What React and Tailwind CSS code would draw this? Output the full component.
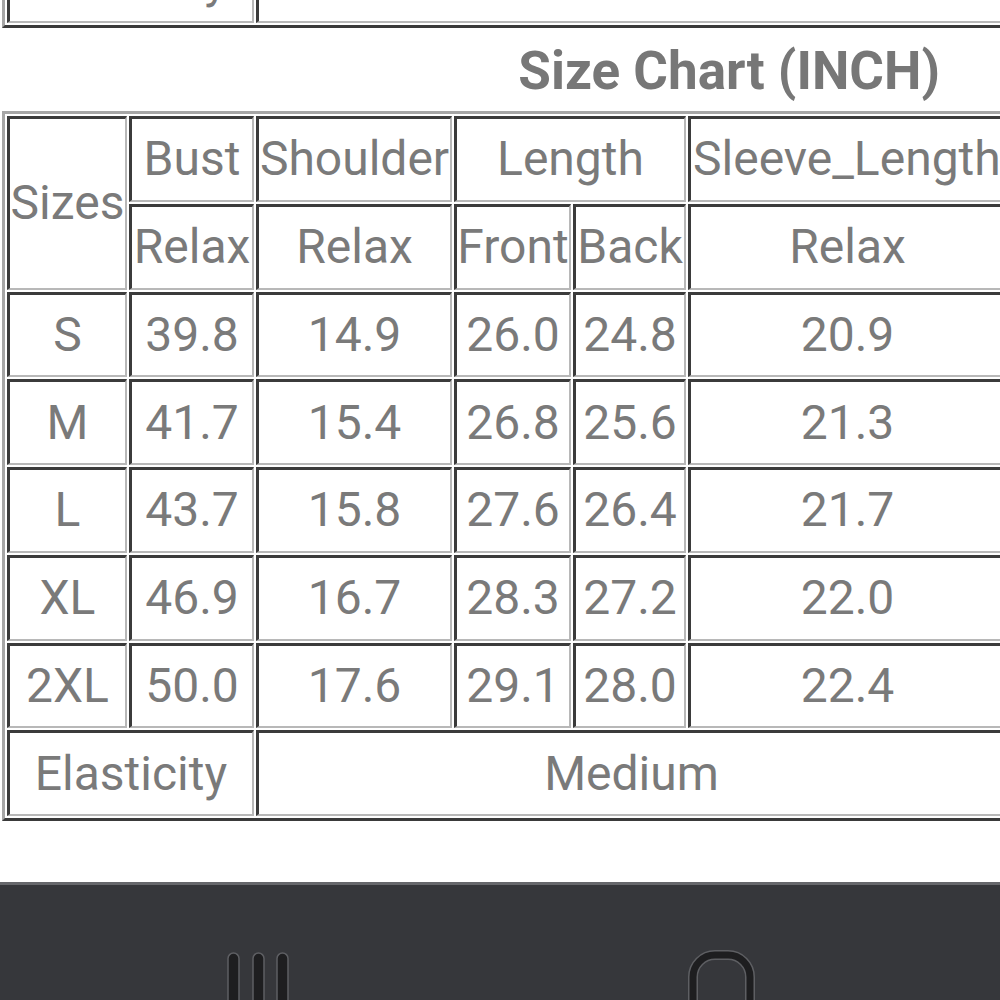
import React from 'react';

const cell =
  'flex items-center justify-center whitespace-nowrap border-t-[3px] border-l-[3px] border-r-2 border-b-2 border-t-[#3b3b3b] border-l-[#3b3b3b] border-r-[#b8b8b8] border-b-[#b8b8b8] text-[48px] leading-none text-[#7a7a7a]';

const gridCols = 'grid grid-cols-[120px_125px_196px_117px_113px_318px] gap-[2px]';

const rows = [
  ['S', '39.8', '14.9', '26.0', '24.8', '20.9'],
  ['M', '41.7', '15.4', '26.8', '25.6', '21.3'],
  ['L', '43.7', '15.8', '27.6', '26.4', '21.7'],
  ['XL', '46.9', '16.7', '28.3', '27.2', '22.0'],
  ['2XL', '50.0', '17.6', '29.1', '28.0', '22.4'],
];

function Frame({ children, className = '' }) {
  return (
    <div className={`ml-[2px] w-max border-[3px] border-t-[#a6a6a6] border-l-[#a6a6a6] border-r-[#3a3a3a] border-b-[#3a3a3a] p-[2px] ${className}`}>
      {children}
    </div>
  );
}

function ElasticityRow() {
  return (
    <>
      <div className={`${cell} col-span-2`}>Elasticity</div>
      <div className={`${cell} col-span-4`}>Medium</div>
    </>
  );
}

export default function App() {
  return (
    <div className="w-[1000px] h-[1000px] overflow-hidden bg-white flex flex-col font-['Roboto',sans-serif]">
      {/* tail of the CM chart above */}
      <div className="h-[28px] overflow-hidden flex flex-col justify-end shrink-0">
        <Frame className="border-t-0 pt-0">
          <div className={`${gridCols} grid-rows-[86px]`}>
            <ElasticityRow />
          </div>
        </Frame>
      </div>

      <div className="h-[83px] shrink-0 flex justify-end pr-[60px] pt-[4px]">
        <h2 className="text-[53px] leading-normal font-bold text-[#777]">Size Chart (INCH)</h2>
      </div>

      <Frame className="shrink-0">
        <div className={`${gridCols} grid-rows-[repeat(8,85.75px)]`}>
          <div className={`${cell} row-span-2`}>Sizes</div>
          <div className={cell}>Bust</div>
          <div className={cell}>Shoulder</div>
          <div className={`${cell} col-span-2`}>Length</div>
          <div className={`${cell} justify-start pl-[2px]`}>Sleeve_Length</div>
          <div className={cell}>Relax</div>
          <div className={cell}>Relax</div>
          <div className={cell}>Front</div>
          <div className={cell}>Back</div>
          <div className={cell}>Relax</div>
          {rows.map((r) =>
            r.map((v, i) => (
              <div key={r[0] + i} className={cell}>{v}</div>
            ))
          )}
          <ElasticityRow />
        </div>
      </Frame>

      <div className="flex-1" />

      {/* android nav bar */}
      <div className="h-[118px] shrink-0 bg-[#36373b] border-t-[3px] border-t-[#66676b] flex items-start">
        <svg width="64" height="60" className="ml-[226px] mt-[67px]" viewBox="0 0 64 60">
          {[2, 27, 51].map((x) => (
            <rect key={x} x={x} y="1" width="11" height="90" rx="5.5" fill="#1e1e20" stroke="#5e5f63" strokeWidth="1.5" />
          ))}
        </svg>
        <svg width="80" height="60" className="ml-[396px] mt-[60px]" viewBox="0 0 80 60">
          <rect x="7" y="10" width="57" height="90" rx="22" fill="none" stroke="#5e5f63" strokeWidth="10" />
          <rect x="7" y="10" width="57" height="90" rx="22" fill="none" stroke="#1e1e20" strokeWidth="7" />
        </svg>
      </div>
    </div>
  );
}
